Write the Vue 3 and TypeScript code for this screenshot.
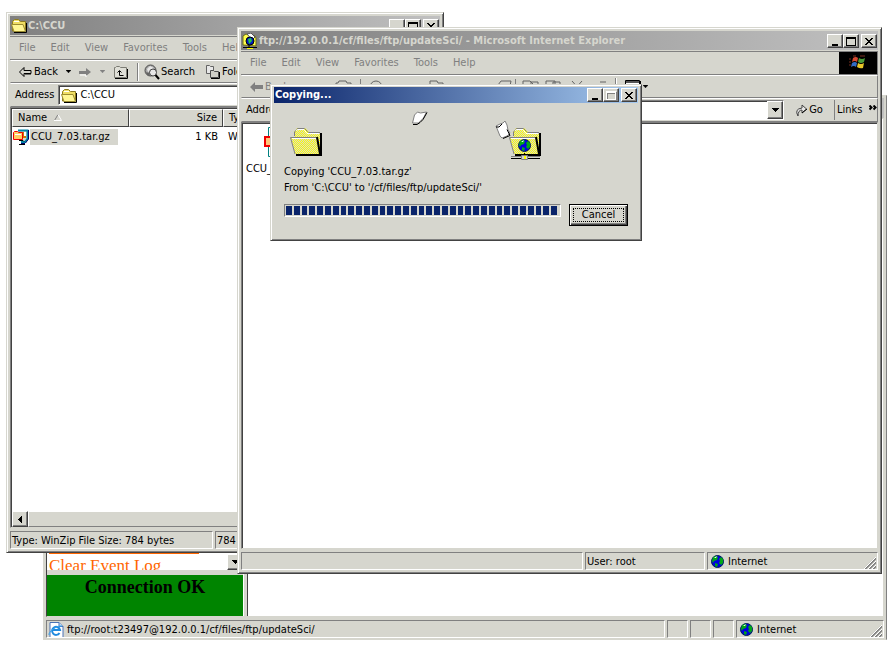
<script setup lang="ts">
interface FileRow {
  name: string
  size: string
  type: string
}

const menus: string[] = ['File', 'Edit', 'View', 'Favorites', 'Tools', 'Help']
const files: FileRow[] = [{ name: 'CCU_7.03.tar.gz', size: '1 KB', type: 'WinZip File' }]
const progressBlocks = 35

// Checkerboard rows for the dithered folder fill.
const dither: string = Array.from({ length: 28 }, (_, y) => `M${y % 2} ${y + 0.5}h32`).join('')
</script>

<template>
  <div class="desktop">
    <svg class="defs" width="0" height="0" aria-hidden="true">
      <defs>
        <clipPath id="folder-shape"><path d="M4 9V4l2-2 1-2h8l3 3 1 1h11v22H5L1 9z" /></clipPath>
      </defs>
      <symbol id="min" viewBox="0 0 10 10"><path d="M2 8h6v2H2z" /></symbol>
      <symbol id="max" viewBox="0 0 10 10"><path fill-rule="evenodd" d="M0 1h10v9H0zM1 3v6h8V3z" /></symbol>
      <symbol id="close" viewBox="0 0 10 10"><path d="M1 2h2v1h1v1h2V3h1V2h2v1H8v1H7v1H6v1h1v1h1v1h1v1H7V8H6V7H4v1H3v1H1V8h1V7h1V6h1V5H3V4H2V3H1z" /></symbol>
      <symbol id="down" viewBox="0 0 7 4"><path d="M0 0h7v1H6v1H5v1H4v1H3V3H2V2H1V1H0z" /></symbol>
      <symbol id="arrow-left" viewBox="0 0 13 10">
        <path d="M5 .5v3h7v3H5v3L.5 5z" fill="#d6d6ce" stroke="currentColor" />
        <path d="M6 7h6" stroke="currentColor" />
      </symbol>
      <symbol id="folder" viewBox="0 0 16 15">
        <path d="M1.500 13V3.500l2-2h4l2 2h5V13z" fill="#efde63" stroke="#8c7b21" />
        <path d="M.5 6.500h11.500l2.500 7H3z" fill="#fff794" stroke="#9c8c31" />
        <path d="M3 14.500h12.500V5" fill="none" stroke="#000" />
        <path d="M3 3.500h5" stroke="#fff" />
      </symbol>
      <symbol id="big-folder" viewBox="0 0 32 28">
        <path d="M4 9V4l2-2 1-2h8l3 3 1 1h11v22H5L1 9z" fill="#ffff00" />
        <path :d="dither" clip-path="url(#folder-shape)" stroke="#d6d6ce" stroke-dasharray="1 1" />
        <path d="M4.500 8V4l2-2 1-1.500h7l3 3 1 1H30" fill="none" stroke="#808080" />
        <path d="M6 2.500l2-1h6l3 4h12" fill="none" stroke="#fff" />
        <path d="M31 5v22H6" fill="none" stroke="#000" stroke-width="2" />
        <path d="M26 9.500H.5L5 26" fill="none" stroke="#808080" />
        <path d="M2 10.500h24" stroke="#fff" />
        <path d="M27 9l3 17" stroke="#000" stroke-width="2" />
      </symbol>
      <symbol id="globe" viewBox="0 0 13 13">
        <circle cx="6.5" cy="6.5" r="6" fill="#0000e0" stroke="#002050" />
        <path d="M2 2l3-1 2 1-1 3-3 1-1 2-1-2zM8 4l2-2 2 2v4l-2 2-2-2 1-2zM4 8l3 1-1 3-2-1z" fill="#00a818" />
        <path d="M3 3l3-2-1 2z" fill="#fff" />
      </symbol>
      <symbol id="zip" viewBox="0 0 16 16">
        <path d="M5 1.500h9.500V10L12 13H8" fill="#d6d6ce" stroke="#0084a5" stroke-width="2" />
        <path d="M7 3h6v6H9z" fill="#ce7900" />
        <path d="M15.500 1v9l-3 4M8 14.500h4" fill="none" stroke="#00006b" />
        <path d="M11 3h2v4h-2z" fill="#fff" />
        <path d="M.5 3.500l1-1h3l1 1h4v7h-9z" fill="#ffce63" stroke="#f00000" />
        <path d="M2 5h6v1H2z" fill="#fff" />
        <path d="M6 11.500h4l1 1M6 15.500h6" fill="none" stroke="#000" />
      </symbol>
      <symbol id="grip" viewBox="0 0 12 12">
        <path d="M1 12L12 1M5 12l7-7M9 12l3-3" stroke="#808080" stroke-width="2" />
        <path d="M0 12L12 0M4 12l8-8M8 12l4-4" stroke="#fff" />
      </symbol>
    </svg>

    <section class="window back">
      <div class="back-title"></div>
      <div class="frames">
        <div class="left-frames">
          <div class="nav-frame">
            <div class="nav-list">
              <span class="nav-rule"></span>
              <a class="nav-link" href="#">Clear Event Log</a>
            </div>
            <div class="vscroll"><button class="btn scroll-btn" aria-label="Scroll down"><svg width="7" height="4"><use href="#down" /></svg></button></div>
          </div>
          <div class="connection">Connection OK</div>
        </div>
        <div class="splitter"></div>
        <div class="main-frame"></div>
      </div>
      <footer class="status">
        <div class="pane grow url">
          <svg width="16" height="16" viewBox="0 0 16 16">
            <path d="M2 .5h9l4 4v11H2z" fill="#fff" stroke="#4a73b5" />
            <path d="M11 .5v4h4" fill="#c5daf5" stroke="#4a73b5" />
            <path d="M11.500 11a4 4 0 1 1 .5-3H4.500" fill="none" stroke="#218ade" stroke-width="2" />
            <path d="M1 13C0 10 9 3 14 4" fill="none" stroke="#39a5ef" />
          </svg>
          ftp://root:t23497@192.0.0.1/cf/files/ftp/updateSci/
        </div>
        <div class="pane tiny"></div>
        <div class="pane tiny"></div>
        <div class="pane tiny"></div>
        <div class="pane zone back-zone"><svg width="13" height="13"><use href="#globe" /></svg>Internet<svg class="grip" width="12" height="12"><use href="#grip" /></svg></div>
      </footer>
    </section>

    <section class="window explorer">
      <header class="titlebar inactive">
        <svg width="16" height="15"><use href="#folder" /></svg>
        <h2>C:\CCU</h2>
        <div class="caption">
          <button class="btn" aria-label="Minimize"><svg width="10" height="10"><use href="#min" /></svg></button>
          <button class="btn" aria-label="Maximize"><svg width="10" height="10"><use href="#max" /></svg></button>
          <button class="btn close" aria-label="Close"><svg width="10" height="10"><use href="#close" /></svg></button>
        </div>
      </header>
      <nav class="menubar"><button v-for="m in menus" :key="m">{{ m }}</button></nav>
      <div class="toolbar">
        <button class="tool"><svg width="13" height="10"><use href="#arrow-left" /></svg>Back</button>
        <button class="tool drop" aria-label="Back history"><svg width="5" height="3"><use href="#down" /></svg></button>
        <button class="tool" aria-label="Forward"><svg width="13" height="10" viewBox="0 0 13 10"><path d="M0 4h7V1l5 4-5 4V7H0z" fill="#808080" /><path d="M1 8h6v2" stroke="#fff" fill="none" /></svg></button>
        <button class="tool drop grey" aria-label="Forward history"><svg width="5" height="3"><use href="#down" /></svg></button>
        <button class="tool" aria-label="Up">
          <svg width="16" height="14" viewBox="0 0 16 14"><path d="M1.500 12.500v-10h1l1-1h3l1 1h6v10z" fill="#deded6" stroke="#7b7b73" /><path d="M14.500 4v9.500H2" stroke="#000" fill="none" /><path d="M4.500 7.500l2-2 2 2M6.500 6v4.500h4" stroke="#000" fill="none" /></svg>
        </button>
        <span class="sep"></span>
        <button class="tool search">
          <svg width="16" height="16" viewBox="0 0 16 16"><circle cx="6.500" cy="6.500" r="5.500" fill="#a5a5a5" stroke="#4a4a4a" /><path d="M3 5l3-3 4 2-3 3-3 1z" fill="#e7e7e7" /><path d="M2 8l3 1 1 3-3-1z" fill="#636363" /><circle cx="9" cy="8.500" r="3.500" fill="#e7e7e7" stroke="#424242" /><path d="M11.500 11l3.500 4" stroke="#000" stroke-width="2" /></svg>Search
        </button>
        <button class="tool folders">
          <svg width="14" height="14" viewBox="0 0 14 14"><path d="M.5 8.500v-8h3l1 1h3v7z" fill="#e7e7e7" stroke="#636363" /><path d="M4.500 12.500v-7h3l1 1h4v6z" fill="#cecec6" stroke="#4a4a4a" /><path d="M5 13.500h8.500V7" fill="none" stroke="#000" /></svg>Folders
        </button>
      </div>
      <div class="addressbar">
        <label for="path">Address</label>
        <div class="field"><svg width="16" height="15"><use href="#folder" /></svg><input id="path" value="C:\CCU" /></div>
      </div>
      <div class="view">
        <table>
          <thead>
            <tr>
              <th class="c-name">Name <svg width="8" height="7" viewBox="0 0 8 7"><path d="M.5 6.500L4 .5" stroke="#808080" /><path d="M4 .5l3.500 6H0" fill="none" stroke="#fff" /></svg></th>
              <th class="c-size">Size</th>
              <th>Type</th>
            </tr>
          </thead>
          <tbody>
            <tr v-for="f in files" :key="f.name">
              <td><div class="file"><svg width="16" height="16"><use href="#zip" /></svg><span>{{ f.name }}</span></div></td>
              <td class="c-size">{{ f.size }}</td>
              <td class="c-type">{{ f.type }}</td>
            </tr>
          </tbody>
        </table>
        <div class="hscroll"><button class="btn scroll-btn" aria-label="Scroll left"><svg width="4" height="7" viewBox="0 0 4 7"><path d="M4 0v7H3V6H2V5H1V4H0V3h1V2h1V1h1V0z" /></svg></button><div class="thumb"></div></div>
      </div>
      <footer class="status">
        <div class="pane file-type">Type: WinZip File Size: 784 bytes</div>
        <div class="pane grow">784 bytes</div>
      </footer>
    </section>

    <section class="window ie">
      <header class="titlebar inactive">
        <svg width="16" height="16" viewBox="0 0 16 16"><path d="M1 12V3l3-2 3 1 6 1 1 2v8z" fill="#ffff4a" stroke="#6b6b18" /><path d="M5 1l4-1 4 4-3 3z" fill="#fff" stroke="#555" /><circle cx="8" cy="8" r="4" fill="#0018c6" stroke="#000" /><path d="M6 6l3-1 1 3-3 3z" fill="#29c642" /><path d="M1 14.500h14M7 12v3" stroke="#000" /><path d="M5 15.500h6" stroke="#ff0" /></svg>
        <h2>ftp://192.0.0.1/cf/files/ftp/updateSci/ - Microsoft Internet Explorer</h2>
        <div class="caption">
          <button class="btn" aria-label="Minimize"><svg width="10" height="10"><use href="#min" /></svg></button>
          <button class="btn" aria-label="Maximize"><svg width="10" height="10"><use href="#max" /></svg></button>
          <button class="btn close" aria-label="Close"><svg width="10" height="10"><use href="#close" /></svg></button>
        </div>
      </header>
      <nav class="menubar">
        <button v-for="m in menus" :key="m">{{ m }}</button>
        <div class="brand">
          <svg width="18" height="16" viewBox="0 0 18 16">
            <path d="M4 3q3-2 5 0L8 7Q6 5 3 7z" fill="#d64a31" /><path d="M10 3q3 2 6 0l-1 4q-3 2-6 0z" fill="#4a9c39" />
            <path d="M3 8q3-2 5 0l-1 4q-2-2-5 0z" fill="#316bc6" /><path d="M9 8q3 2 6 0l-1 5q-3 1-6-1z" fill="#e7c629" />
            <path d="M0 4h2M0 7h2M0 10h2M4 1h3M11 1h5" stroke="#7b3121" />
          </svg>
        </div>
      </nav>
      <div class="toolbar">
        <button class="tool faded"><svg width="13" height="10" viewBox="0 0 13 10"><path d="M5 0v3h8v4H5v3L0 5z" fill="#808080" /></svg>Back</button>
        <svg class="tool-icons" width="338" height="16" viewBox="0 0 338 16">
          <g fill="none" stroke="#636363">
            <path d="M67 14V4h2l1-2h7l1 2h4v10z" /><circle cx="107" cy="8" r="6" /><path d="M161 14V2h7l1 2h5v10M229 6l3-4h10l-2 10h-8zM254 2h7l3 3v9h-10zM262 3h7v9h-7zM277 2h9v8h-9zM284 3h7v9h-7zM303 2l8 9M313 2l-8 9M331 3h6" />
          </g>
          <path d="M91.500 0v16M246.500 0v16" stroke="#808080" />
        </svg>
        <span class="sep"></span>
        <button class="tool" aria-label="Views"><svg width="16" height="14" viewBox="0 0 16 14"><path d="M.5.5h14v13H.5z" fill="#fff" stroke="#000" /><path d="M1 2h13" stroke="#555" stroke-width="2" /><path d="M15.500 1v13M11 5.500h2M11 8.500h2M11 11.500h2" stroke="#000" /></svg><svg width="5" height="3"><use href="#down" /></svg></button>
      </div>
      <div class="addressbar">
        <label for="url">Address</label>
        <div class="field"><input id="url" value="" /><button class="btn combo" aria-label="Show addresses"><svg width="7" height="4"><use href="#down" /></svg></button></div>
        <button class="tool go"><svg width="12" height="13" viewBox="0 0 12 13"><path d="M3 12Q-1 5 7 4V1l4.500 4L7 9V6Q3 6 3 12z" fill="#e7e7e7" stroke="#424242" /><path d="M7 9l5-4" stroke="#000" /></svg>Go</button>
        <button class="tool links">Links<svg width="8" height="11" viewBox="0 0 8 11"><path d="M.5.5l2 2-2 2M4.500.5l2 2-2 2" fill="none" stroke="#000" stroke-width="2" /></svg></button>
      </div>
      <div class="view ie-view">
        <div class="ftp-item"><svg width="30" height="32" viewBox="0 0 30 32"><path d="M10.500 1.500h18v29h-18z" fill="#fff" stroke="#008080" /><path d="M7 11h8v9H7z" fill="#ffc67b" stroke="#f00000" stroke-width="2" /></svg><span>CCU_7.03.tar.gz</span></div>
      </div>
      <footer class="status">
        <div class="pane grow"></div>
        <div class="pane user">User: root</div>
        <div class="pane zone"><svg width="13" height="13"><use href="#globe" /></svg>Internet<svg class="grip" width="12" height="12"><use href="#grip" /></svg></div>
      </footer>
    </section>

    <section class="window dialog" role="dialog" aria-labelledby="copy-title">
      <header class="titlebar active">
        <h2 id="copy-title">Copying...</h2>
        <div class="caption">
          <button class="btn" aria-label="Minimize"><svg width="10" height="10"><use href="#min" /></svg></button>
          <button class="btn" aria-label="Maximize" disabled><svg width="10" height="10"><use href="#max" /></svg></button>
          <button class="btn close" aria-label="Close"><svg width="10" height="10"><use href="#close" /></svg></button>
        </div>
      </header>
      <div class="dialog-body">
        <svg class="scene" width="260" height="52" viewBox="0 0 260 52">
          <use href="#big-folder" x="6" y="20" width="32" height="28" />
          <path d="M128.500 15l2-8 3-3 3 1 6-1-3 6-5 5z" fill="#fff" stroke="#808080" /><path d="M129 16.500h4l3-2 3-3 4-7" fill="none" stroke="#000" />
          <use href="#big-folder" x="225" y="20" width="32" height="28" />
          <svg x="234" y="31" width="13" height="13"><use href="#globe" /></svg>
          <path d="M227 48.500h29" stroke="#808080" /><path d="M227 50.500h29M240.500 45v3" stroke="#000" /><path d="M237.500 47.500h6v4h-6z" fill="#d6d6ce" stroke="#808080" /><path d="M240 48h2v3h-2z" fill="#ffff00" />
          <path d="M212 18l4-2 3-1 2-2 2 4 1 5 2 3-3 3-5 2-2-2-2-5z" fill="#fff" stroke="#808080" /><path d="M212 19h3l3-3M219 30.500l7-3-3-6" fill="none" stroke="#000" />
        </svg>
        <p>Copying 'CCU_7.03.tar.gz'</p>
        <p>From 'C:\CCU' to '/cf/files/ftp/updateSci/'</p>
        <div class="progress-row">
          <div class="progress" role="progressbar" aria-label="Copy progress"><i v-for="n in progressBlocks" :key="n"></i></div>
          <button class="btn cancel"><span>Cancel</span></button>
        </div>
      </div>
    </section>
  </div>
</template>

<style>
body {
  background: #fff;
}
</style>

<style scoped>
* {
  box-sizing: border-box;
}
.desktop {
  position: relative;
  min-height: 100vh;
  overflow: hidden;
  font: 11px/14px 'DejaVu Sans Condensed', 'Noto Sans', sans-serif;
  color: #000;
}
.defs {
  position: absolute;
}
svg {
  flex: none;
  display: block;
}
button,
input {
  font: inherit;
  color: inherit;
  margin: 0;
  padding: 0;
  border: 0;
  background: none;
  white-space: nowrap;
}
h2,
p {
  margin: 0;
}
.window {
  position: absolute;
  display: flex;
  flex-direction: column;
  background: #d6d6ce;
  border: 1px solid;
  border-color: #d6d6ce #424242 #424242 #d6d6ce;
  box-shadow: inset 1px 1px #fff, inset -1px -1px #808080;
  padding: 3px;
  white-space: nowrap;
}
.explorer {
  left: 6px;
  top: 12px;
  right: 451px;
  bottom: 102px;
}
.ie {
  left: 237px;
  top: 27px;
  right: 13px;
  bottom: 81px;
}
.dialog {
  left: 270px;
  top: 84px;
  width: 372px;
  padding: 2px 3px 3px;
}
.back {
  left: 43px;
  top: 95px;
  right: 8px;
  bottom: 15px;
  border-color: #d6d6ce #808080 #d6d6ce #d6d6ce;
  box-shadow: none;
  padding: 2px 2px 1px;
}

/* title bars */
.titlebar {
  display: flex;
  align-items: center;
  flex: none;
  height: 19px;
  padding: 0 1px;
  gap: 1px;
  color: #d6d6ce;
}
.titlebar h2 {
  font-size: 11px;
  font-weight: bold;
  flex: 1;
}
.inactive {
  background: linear-gradient(90deg, #808080, #c0c0c0);
}
.active {
  height: 16px;
  background: linear-gradient(90deg, #0a246a, #a6caf0);
  color: #fff;
}
.caption {
  display: flex;
}
.btn {
  display: flex;
  align-items: center;
  justify-content: center;
  background: #d6d6ce;
  color: #000;
  border: 1px solid;
  border-color: #fff #424242 #424242 #fff;
  box-shadow: inset -1px -1px #808080;
}
.caption .btn {
  width: 16px;
  height: 14px;
}
.caption .close {
  margin-left: 2px;
}
.btn:disabled svg {
  fill: #fff;
  filter: drop-shadow(1px 1px #808080);
}

/* bars */
.menubar {
  display: flex;
  align-items: center;
  flex: none;
  height: 24px;
  margin-top: 1px;
  padding-left: 9px;
  gap: 15px;
  color: #808080;
  border: 1px solid #808080;
  border-width: 1px 1px 1px 0;
}
.brand {
  display: flex;
  align-items: center;
  justify-content: center;
  align-self: stretch;
  width: 38px;
  margin-left: auto;
  background: #000;
}
.toolbar {
  display: flex;
  align-items: center;
  flex: none;
  height: 23px;
  padding-left: 8px;
  gap: 8px;
  border: 1px solid;
  border-color: #fff #808080 #808080 #d6d6ce;
}
.tool {
  display: flex;
  align-items: center;
  gap: 2px;
}
.search {
  gap: 1px;
  margin-left: -3px;
}
.folders {
  margin-left: 3px;
}
.grey {
  fill: #808080;
}
.faded {
  color: #808080;
}
.sep {
  height: 18px;
  border-left: 1px solid #808080;
  border-right: 1px solid #fff;
}
.tool-icons {
  margin-left: -28px;
}
.addressbar {
  display: flex;
  align-items: center;
  flex: none;
  height: 24px;
  padding: 1px 0 1px 4px;
  gap: 4px;
  border: 1px solid;
  border-color: #fff #808080 #808080 #d6d6ce;
}
.field {
  display: flex;
  align-items: center;
  align-self: stretch;
  flex: 1;
  padding-left: 2px;
  gap: 3px;
  background: #fff;
  border: 1px solid;
  border-color: #808080 #fff #fff #808080;
  box-shadow: inset 1px 1px #424242;
}
.field input {
  flex: 1;
  min-width: 0;
}
.combo {
  width: 16px;
  align-self: stretch;
}
.go {
  width: 42px;
  justify-content: center;
}
.links {
  width: 43px;
  align-self: stretch;
  justify-content: space-between;
  padding-left: 2px;
  border-left: 1px solid #808080;
}

/* content */
.view {
  display: flex;
  flex-direction: column;
  flex: 1;
  min-height: 0;
  background: #fff;
  border: 1px solid;
  border-color: #808080 #d6d6ce #d6d6ce #808080;
  box-shadow: inset 1px 1px #424242;
  padding: 1px 1px 0;
}
table {
  border-collapse: separate;
  border-spacing: 0;
  width: 100%;
  table-layout: fixed;
}
th {
  height: 18px;
  padding: 0 5px;
  font-weight: normal;
  text-align: left;
  background: #d6d6ce;
  border: 1px solid;
  border-color: #fff #424242 #424242 #fff;
}
th svg {
  display: inline-block;
  margin-left: 4px;
}
td {
  padding: 2px 5px 1px;
}
td:first-child {
  padding: 2px 1px 1px;
}
.c-name {
  width: 117px;
}
.c-size {
  width: 94px;
  text-align: right;
}
.file {
  display: flex;
  align-items: center;
  gap: 1px;
}
.file span {
  background: #d6d6ce;
  padding: 1px 8px 1px 1px;
}
.hscroll {
  display: flex;
  height: 16px;
  margin-top: auto;
}
.scroll-btn {
  width: 16px;
  height: 16px;
}
.thumb {
  flex: 1;
  background: #d6d6ce;
  border: 1px solid;
  border-color: #fff #808080 #808080 #fff;
}
.ftp-item {
  display: flex;
  flex-direction: column;
  width: 70px;
  padding: 2px 3px;
  gap: 4px;
}
.ftp-item svg {
  margin-left: 12px;
}

/* status bars */
.status {
  display: flex;
  flex: none;
  gap: 2px;
  padding-top: 3px;
}
.pane {
  display: flex;
  align-items: center;
  height: 18px;
  padding: 1px 1px 0;
  border: 1px solid;
  border-color: #808080 #fff #fff #808080;
  overflow: hidden;
}
.grow {
  flex: 1;
  min-width: 0;
}
.file-type {
  width: 203px;
}
.user {
  width: 120px;
}
.zone {
  width: 171px;
  padding-left: 3px;
  gap: 4px;
}
.back-zone {
  width: 148px;
}
.grip {
  margin-left: auto;
  align-self: flex-end;
}
.tiny {
  width: 21px;
}
.url {
  gap: 3px;
}

/* framed page */
.back-title {
  height: 20px;
  background: #c0c0c0;
}
.frames {
  display: flex;
  flex: 1;
  min-height: 0;
  background: #fff;
  border: 1px solid #d6d6ce;
  border-left-color: #424242;
}
.left-frames {
  display: flex;
  flex-direction: column;
  width: 196px;
  font-family: 'Liberation Serif', serif;
}
.nav-frame {
  display: flex;
  flex: 1;
  min-height: 0;
  border-bottom: 1px solid #d6d6ce;
}
.nav-list {
  display: flex;
  flex-direction: column;
  justify-content: flex-end;
  flex: 1;
  overflow: hidden;
  padding-left: 2px;
}
.nav-rule {
  width: 150px;
  height: 1px;
  background: #ff6600;
}
.nav-link {
  font-size: 17px;
  line-height: 24px;
  height: 16px;
  color: #ff6600;
  text-decoration: none;
}
.vscroll {
  display: flex;
  align-items: flex-end;
}
.connection {
  height: 45px;
  border-top: 4px solid #d6d6ce;
  background: #008400;
  text-align: center;
  font-size: 18px;
  line-height: 24px;
  font-weight: bold;
}
.splitter {
  width: 5px;
  background: #d6d6ce;
  border-left: 1px solid #fff;
  border-right: 1px solid #424242;
}
.main-frame {
  flex: 1;
}

/* copy dialog */
.dialog-body {
  padding: 5px 10px 11px;
}
.scene {
  margin-bottom: 4px;
}
.dialog-body p {
  line-height: 16px;
}
.progress-row {
  display: flex;
  align-items: flex-start;
  gap: 8px;
  margin-top: 8px;
}
.progress {
  display: flex;
  gap: 2px;
  flex: 1;
  height: 13px;
  padding: 1px 3px 1px 1px;
  border: 1px solid;
  border-color: #808080 #fff #fff #808080;
}
.progress i {
  flex: 1;
  background: #0a246a;
}
.cancel {
  width: 59px;
  height: 22px;
  padding: 2px;
  border: 1px solid #000;
  box-shadow: inset 1px 1px #fff, inset -1px -1px #424242, inset -2px -2px #808080;
}
.cancel span {
  flex: 1;
  line-height: 12px;
  margin: 1px;
  border: 1px dotted #000;
}
</style>
